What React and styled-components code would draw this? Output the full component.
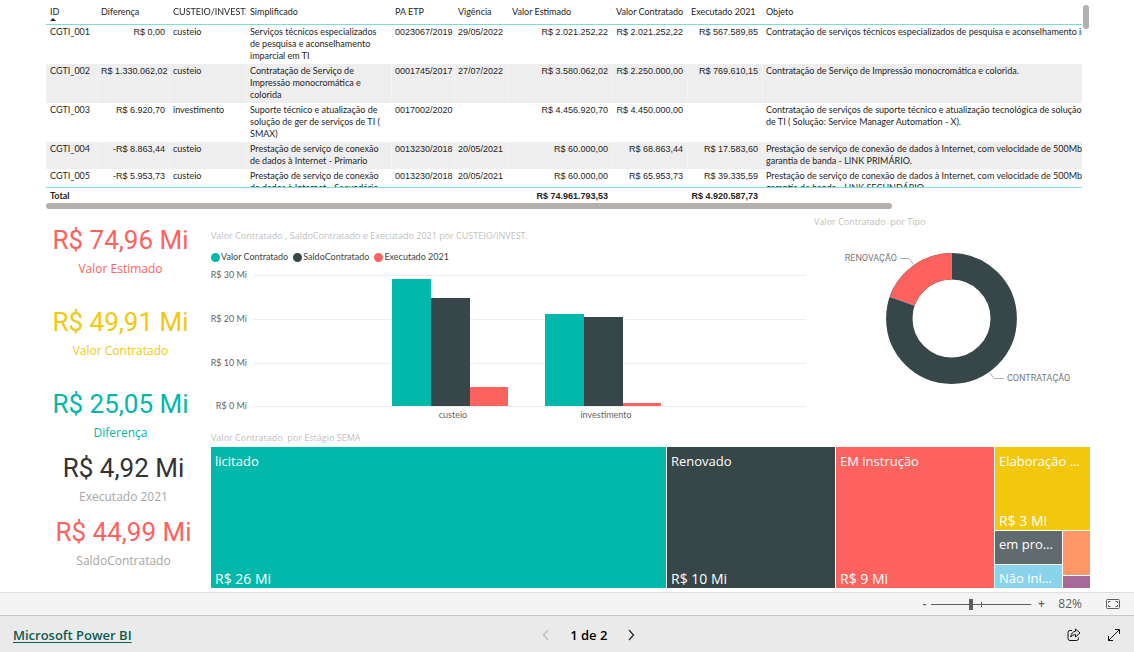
import React from "react";
import styled, { createGlobalStyle } from "styled-components";

const GlobalStyle = createGlobalStyle`
  * {
    box-sizing: border-box;
  }
  body {
    margin: 0;
    background: #fff;
    color: #252423;
    font-family: "Open Sans", "Noto Sans", sans-serif;
  }
  button {
    border: 0;
    padding: 0;
    background: none;
    color: inherit;
    font: inherit;
    cursor: pointer;
  }
`;

const teal = "#01b8aa";
const dark = "#374649";
const red = "#fd625e";
const yellow = "#f2c80f";

const Page = styled.div`
  display: flex;
  flex-direction: column;
  min-height: 100vh;
`;

const Report = styled.main`
  flex: 1;
  padding: 0 44px 4px 46px;
`;

/* ---------- table ---------- */

const TableArea = styled.section`
  display: flex;
`;

const TableViewport = styled.div`
  flex: 1;
  min-width: 0;
  height: 203px;
  overflow: hidden;
`;

const Table = styled.table`
  width: 1300px;
  table-layout: fixed;
  border-collapse: separate;
  border-spacing: 0;
  font-family: Lato, sans-serif;
  font-size: 9px;
  line-height: 12px;
  th,
  td {
    padding: 1px 4px 2px;
    text-align: left;
    vertical-align: top;
    font-weight: 400;
    white-space: nowrap;
  }
  thead th {
    position: sticky;
    top: 0;
    height: 25px;
    padding-top: 6px;
    background: #fff;
    border-bottom: 1px solid #7fdbd4;
  }
  tbody tr:nth-child(even) td {
    background: #eee;
    border-left: 1px solid #f4f4f4;
    padding-left: 3px;
  }
  tfoot td {
    position: sticky;
    bottom: 0;
    height: 16px;
    padding-top: 2px;
    padding-bottom: 1px;
    background: #fff;
    border-top: 1px solid #7fdbd4;
    font-weight: 700;
  }
  && .digits,
  && .number {
    font-family: "Liberation Sans", sans-serif;
  }
  && .number {
    text-align: right;
  }
`;

const SortMark = styled.span`
  display: block;
  width: 0;
  border: 3px solid transparent;
  border-top: 0;
  border-bottom: 3px solid #252423;
`;

const VerticalBar = styled.div`
  width: 6px;
  height: 24px;
  margin: 5px 1px 0;
  border-radius: 3px;
  background: #b3b0ad;
`;

const HorizontalBar = styled.div`
  width: 81%;
  height: 6px;
  border-radius: 3px;
  background: #b3b0ad;
`;

/* ---------- lower part ---------- */

const Lower = styled.div`
  display: flex;
  gap: 16px;
`;

const KpiColumn = styled.aside`
  display: flex;
  flex-direction: column;
  gap: 6px;
  width: 149px;
  padding-top: 14px;
`;

const KpiGroup = styled.div`
  display: flex;
  flex-direction: column;
  gap: ${(p) => p.$gap};
  padding-left: ${(p) => p.$indent || 0};
`;

const Kpi = styled.div`
  text-align: center;
  white-space: nowrap;
  color: ${(p) => p.$color};
  strong {
    display: block;
    font: 400 26px/34px Roboto, sans-serif;
  }
  span {
    display: block;
    font-size: 12px;
    line-height: 24px;
    color: ${(p) => p.$label || "inherit"};
  }
`;

const Charts = styled.div`
  flex: 1;
  min-width: 0;
`;

const ChartRow = styled.div`
  display: grid;
  grid-template-columns: 595fr 276fr;
  gap: 8px;
  padding-bottom: 8px;
`;

const Panel = styled.section`
  min-width: 0;
  padding-top: ${(p) => p.$top};
  svg {
    display: block;
    width: 100%;
  }
`;

const Title = styled.h2`
  margin: 0;
  font-size: 9px;
  font-weight: 400;
  line-height: 16px;
  color: #c0bfbe;
  white-space: pre;
`;

const Legend = styled.ul`
  display: flex;
  gap: 5px;
  margin: 6px 0 0;
  padding: 0;
  list-style: none;
  font-family: Lato, sans-serif;
  font-size: 9px;
  line-height: 14px;
  color: #444;
`;

const LegendItem = styled.li`
  display: flex;
  align-items: center;
  gap: 1px;
  &::before {
    content: "";
    width: 9px;
    height: 9px;
    border-radius: 50%;
    background: ${(p) => p.$color};
  }
`;

const Axis = styled.text`
  font-family: Lato, sans-serif;
  font-size: 9px;
  fill: #666;
`;

const Callout = styled.text`
  font: 9px Roboto, sans-serif;
  fill: #777;
`;

const Treemap = styled.div`
  display: grid;
  grid-template-columns: 455fr 168fr 158fr 95fr;
  gap: 1px;
  height: 141px;
  margin-top: 1px;
`;

const SmallTiles = styled.div`
  display: grid;
  grid-template-rows: 83px 1fr;
  gap: 1px;
  min-width: 0;
`;

const SmallRow = styled.div`
  display: grid;
  grid-template-columns: 67fr 27fr;
  gap: 1px;
  min-width: 0;
`;

const SmallStack = styled.div`
  display: grid;
  grid-template-rows: ${(p) => p.$rows};
  gap: 1px;
  min-width: 0;
`;

const Tile = styled.div`
  display: flex;
  flex-direction: column;
  justify-content: space-between;
  min-width: 0;
  padding: ${(p) => (p.$small ? "4px 4px 0" : "5px 4px 0")};
  background: ${(p) => p.$color};
  color: #fff;
  font-size: 13px;
  line-height: 19px;
  overflow: hidden;
  span {
    overflow: hidden;
    text-overflow: ellipsis;
    white-space: nowrap;
  }
  span + span {
    font-size: 14px;
  }
`;

/* ---------- bottom bars ---------- */

const ZoomBar = styled.div`
  display: flex;
  align-items: center;
  justify-content: flex-end;
  height: 24px;
  padding-right: 14px;
  background: #f4f4f4;
  border-top: 1px solid #dedede;
  border-bottom: 1px solid #c8c6c4;
  color: #605e5c;
  font-size: 12px;
  line-height: 20px;
  button {
    display: flex;
    justify-content: center;
    width: 14px;
  }
  output {
    margin: 0 24px 0 10px;
  }
`;

const StepButton = styled.button`
  font-weight: 600;
`;

const ZoomSlider = styled.input`
  appearance: none;
  width: 100px;
  height: 11px;
  margin: 0 3px 0 0;
  background: linear-gradient(#605e5c, #605e5c) 50px 50% / 1px 5px no-repeat,
    linear-gradient(#605e5c, #605e5c) 0 50% / 100% 1px no-repeat;
  &::-webkit-slider-thumb {
    appearance: none;
    width: 4px;
    height: 11px;
    background: #605e5c;
  }
`;

const Footer = styled.footer`
  display: flex;
  align-items: center;
  justify-content: space-between;
  height: 36px;
  padding: 2px 0 0 13px;
  background: #eaeaea;
  color: #000;
`;

const BrandLink = styled.a`
  font-size: 13px;
  font-weight: 600;
  line-height: 20px;
  color: #0b5c50;
  text-underline-offset: 2px;
`;

const Pager = styled.nav`
  display: flex;
  align-items: center;
  gap: 18px;
  font-size: 13px;
  font-weight: 600;
`;

const PagerButton = styled.button`
  display: flex;
  color: #222;
  &:disabled {
    color: #bbb;
  }
`;

const Actions = styled.div`
  display: flex;
  padding-left: 8px;
  button {
    display: flex;
    justify-content: center;
    width: 40px;
  }
`;

const columns = [
  { name: "ID", width: 51 },
  { name: "Diferença", width: 72, kind: "number" },
  { name: "CUSTEIO/INVEST.", width: 77 },
  { name: "Simplificado", width: 145 },
  { name: "PA ETP", width: 63, kind: "digits" },
  { name: "Vigência", width: 54, kind: "digits" },
  { name: "Valor Estimado", width: 104, kind: "number" },
  { name: "Valor Contratado", width: 75, kind: "number" },
  { name: "Executado 2021", width: 75, kind: "number" },
  { name: "Objeto" },
];

const rows = [
  [
    "CGTI_001",
    "R$ 0,00",
    "custeio",
    ["Serviços técnicos especializados", "de pesquisa e aconselhamento", "imparcial em TI"],
    "0023067/2019",
    "29/05/2022",
    "R$ 2.021.252,22",
    "R$ 2.021.252,22",
    "R$ 567.589,85",
    "Contratação de serviços técnicos especializados de pesquisa e aconselhamento imparcial em TI",
  ],
  [
    "CGTI_002",
    "R$ 1.330.062,02",
    "custeio",
    ["Contratação de Serviço de", "Impressão monocromática e", "colorida"],
    "0001745/2017",
    "27/07/2022",
    "R$ 3.580.062,02",
    "R$ 2.250.000,00",
    "R$ 769.610,15",
    "Contratação de Serviço de Impressão monocromática e colorida.",
  ],
  [
    "CGTI_003",
    "R$ 6.920,70",
    "investimento",
    ["Suporte técnico e atualização de", "solução de ger de serviços de TI (", "SMAX)"],
    "0017002/2020",
    "",
    "R$ 4.456.920,70",
    "R$ 4.450.000,00",
    "",
    [
      "Contratação de serviços de suporte técnico e atualização tecnológica de solução de gerenciamento",
      "de TI ( Solução: Service Manager Automation - X).",
    ],
  ],
  [
    "CGTI_004",
    "-R$ 8.863,44",
    "custeio",
    ["Prestação de serviço de conexão", "de dados à Internet - Primario"],
    "0013230/2018",
    "20/05/2021",
    "R$ 60.000,00",
    "R$ 68.863,44",
    "R$ 17.583,60",
    [
      "Prestação de serviço de conexão de dados à Internet, com velocidade de 500Mb/s e",
      "garantia de banda - LINK PRIMÁRIO.",
    ],
  ],
  [
    "CGTI_005",
    "-R$ 5.953,73",
    "custeio",
    ["Prestação de serviço de conexão", "de dados à Internet - Secundário"],
    "0013230/2018",
    "20/05/2021",
    "R$ 60.000,00",
    "R$ 65.953,73",
    "R$ 39.335,59",
    [
      "Prestação de serviço de conexão de dados à Internet, com velocidade de 500Mb/s e",
      "garantia de banda - LINK SECUNDÁRIO.",
    ],
  ],
];

const totals = ["Total", "", "", "", "", "", "R$ 74.961.793,53", "", "R$ 4.920.587,73", ""];

const gridLines = [
  { label: "R$ 30 Mi", y: 11 },
  { label: "R$ 20 Mi", y: 55 },
  { label: "R$ 10 Mi", y: 99 },
  { label: "R$ 0 Mi", y: 142 },
];

const barGroups = [
  { name: "custeio", x: 181, heights: [127, 108, 19] },
  { name: "investimento", x: 334, heights: [92, 89, 3] },
];

const barColors = [teal, dark, red];

const Lines = ({ value }) => {
  if (!Array.isArray(value)) return value;
  return value.map((line, i) => (
    <React.Fragment key={line}>
      {i > 0 && <br />}
      {line}
    </React.Fragment>
  ));
};

const ContractsTable = () => (
  <>
    <TableArea>
      <TableViewport>
        <Table>
          <colgroup>
            {columns.map((c) => (
              <col key={c.name} style={{ width: c.width }} />
            ))}
          </colgroup>
          <thead>
            <tr>
              {columns.map((c, i) => (
                <th key={c.name} scope="col">
                  {c.name}
                  {i === 0 && <SortMark />}
                </th>
              ))}
            </tr>
          </thead>
          <tbody>
            {rows.map((row) => (
              <tr key={row[0]}>
                {row.map((cell, i) => (
                  <td key={columns[i].name} className={columns[i].kind}>
                    <Lines value={cell} />
                  </td>
                ))}
              </tr>
            ))}
          </tbody>
          <tfoot>
            <tr>
              {totals.map((cell, i) => (
                <td key={columns[i].name} className={columns[i].kind}>
                  {cell}
                </td>
              ))}
            </tr>
          </tfoot>
        </Table>
      </TableViewport>
      <VerticalBar />
    </TableArea>
    <HorizontalBar />
  </>
);

const BarChart = () => (
  <svg viewBox="0 0 595 158" role="img" aria-label="Valores por CUSTEIO/INVEST.">
    {gridLines.map((g) => (
      <g key={g.label}>
        <rect x="42" y={g.y} width="553" height="1" fill="#eee" />
        <Axis x="36" y={g.y + 3} textAnchor="end">
          {g.label}
        </Axis>
      </g>
    ))}
    {barGroups.map((group) => (
      <g key={group.name}>
        {group.heights.map((h, i) => (
          <rect key={i} x={group.x + i * 39} y={142 - h} width={i === 2 ? 38 : 39} height={h} fill={barColors[i]} />
        ))}
        <Axis x={group.x + 61} y="154" textAnchor="middle">
          {group.name}
        </Axis>
      </g>
    ))}
  </svg>
);

const DonutChart = () => (
  <svg viewBox="0 0 276 190" role="img" aria-label="Valor Contratado por Tipo">
    <circle cx="137.5" cy="88.5" r="52.2" fill="none" stroke={dark} strokeWidth="26.4" />
    <path d="M137.5 23.1A65.4 65.4 0 0 0 75.8 66.8L100.7 75.6A39 39 0 0 1 137.5 49.5Z" fill={red} />
    <path d="M137.5 23V49.6M75.8 66.8L100.7 75.6" stroke="#fff" strokeWidth="0.5" opacity="0.6" />
    <path d="M86 28.5H95L99.500 34M176 143L180 148.500H190" fill="none" stroke="#b3b0ad" />
    <Callout x="83" y="31" textAnchor="end">
      RENOVAÇÃO
    </Callout>
    <Callout x="193" y="151">CONTRATAÇÃO</Callout>
  </svg>
);

const App = () => {
  return (
    <Page>
      <GlobalStyle />
      <Report>
        <ContractsTable />
        <Lower>
          <KpiColumn>
            <KpiGroup $gap="24px">
              <Kpi $color={red}>
                <strong>R$ 74,96 Mi</strong>
                <span>Valor Estimado</span>
              </Kpi>
              <Kpi $color={yellow}>
                <strong>R$ 49,91 Mi</strong>
                <span>Valor Contratado</span>
              </Kpi>
              <Kpi $color={teal}>
                <strong>R$ 25,05 Mi</strong>
                <span>Diferença</span>
              </Kpi>
            </KpiGroup>
            <KpiGroup $gap="6px" $indent="6px">
              <Kpi $color="#333" $label="#a6a6a6">
                <strong>R$ 4,92 Mi</strong>
                <span>Executado 2021</span>
              </Kpi>
              <Kpi $color={red} $label="#a6a6a6">
                <strong>R$ 44,99 Mi</strong>
                <span>SaldoContratado</span>
              </Kpi>
            </KpiGroup>
          </KpiColumn>
          <Charts>
            <ChartRow>
              <Panel $top="19px">
                <Title>Valor Contratado , SaldoContratado e Executado 2021 por CUSTEIO/INVEST.</Title>
                <Legend>
                  <LegendItem $color={teal}>Valor Contratado</LegendItem>
                  <LegendItem $color={dark}>SaldoContratado</LegendItem>
                  <LegendItem $color={red}>Executado 2021</LegendItem>
                </Legend>
                <BarChart />
              </Panel>
              <Panel $top="5px">
                <Title>{"Valor Contratado  por Tipo"}</Title>
                <DonutChart />
              </Panel>
            </ChartRow>
            <Title>{"Valor Contratado  por Estágio SEMA"}</Title>
            <Treemap>
              <Tile $color={teal}>
                <span>licitado</span>
                <span>R$ 26 Mi</span>
              </Tile>
              <Tile $color={dark}>
                <span>Renovado</span>
                <span>R$ 10 Mi</span>
              </Tile>
              <Tile $color={red}>
                <span>EM instrução</span>
                <span>R$ 9 Mi</span>
              </Tile>
              <SmallTiles>
                <Tile $color={yellow}>
                  <span>Elaboração de ETP</span>
                  <span>R$ 3 Mi</span>
                </Tile>
                <SmallRow>
                  <SmallStack $rows="32fr 23fr">
                    <Tile $small $color="#5f6b6d">
                      <span>em prorrogação</span>
                    </Tile>
                    <Tile $small $color="#8ad4eb">
                      <span>Não iniciado</span>
                    </Tile>
                  </SmallStack>
                  <SmallStack $rows="43fr 12fr">
                    <Tile $small $color="#fe9666" />
                    <Tile $small $color="#a66999" />
                  </SmallStack>
                </SmallRow>
              </SmallTiles>
            </Treemap>
          </Charts>
        </Lower>
      </Report>
      <ZoomBar>
        <StepButton aria-label="Reduzir">-</StepButton>
        <ZoomSlider type="range" min="0" max="100" defaultValue="39" aria-label="Zoom" />
        <StepButton aria-label="Ampliar">+</StepButton>
        <output>82%</output>
        <button aria-label="Ajustar à página">
          <svg width="14" height="10" viewBox="0 0 14 10" fill="none" stroke="#605e5c">
            <rect x="0.5" y="0.5" width="13" height="9" rx="1" />
            <path d="M4.500 2.500H2.500V4M2.500 6V7.500H4.500M9.500 2.500H11.500V4M11.500 6V7.500H9.500" />
          </svg>
        </button>
      </ZoomBar>
      <Footer>
        <BrandLink href="#powerbi">Microsoft Power BI</BrandLink>
        <Pager aria-label="Páginas">
          <PagerButton disabled aria-label="Página anterior">
            <svg width="12" height="12" viewBox="0 0 12 12" fill="none" stroke="currentColor" strokeWidth="1.2">
              <path d="M8 1L3.500 6L8 11" />
            </svg>
          </PagerButton>
          <span>1 de 2</span>
          <PagerButton aria-label="Próxima página">
            <svg width="12" height="12" viewBox="0 0 12 12" fill="none" stroke="currentColor" strokeWidth="1.2">
              <path d="M4 1L8.500 6L4 11" />
            </svg>
          </PagerButton>
        </Pager>
        <Actions>
          <button aria-label="Compartilhar">
            <svg width="14" height="14" viewBox="0 0 14 14" fill="none" stroke="#111" strokeLinejoin="round">
              <path d="M5 2.500H3A2 2 0 0 0 1 4.500V10.500A2 2 0 0 0 3 12.500H9.500A2 2 0 0 0 11.500 10.500V9.500" />
              <path d="M8.500 1L13 5L8.500 9V6.700C6.500 6.600 5 7.200 3.800 9C4 5.500 5.800 3.600 8.500 3.400Z" />
            </svg>
          </button>
          <button aria-label="Tela inteira">
            <svg width="14" height="14" viewBox="0 0 14 14" fill="none" stroke="#111">
              <path d="M1.500 12.500L12.500 1.500M8 1.500H12.500V6M1.500 8V12.500H6" />
            </svg>
          </button>
        </Actions>
      </Footer>
    </Page>
  );
};

export default App;
